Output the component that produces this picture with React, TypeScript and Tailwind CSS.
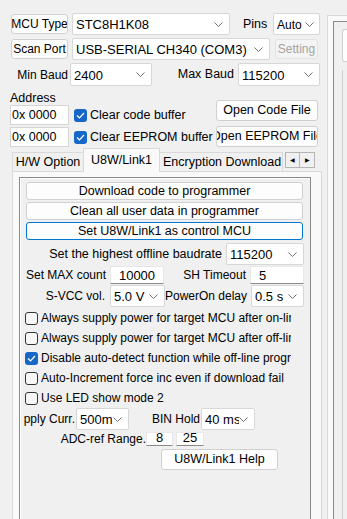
import clsx from "clsx";
import type { ReactNode } from "react";

function Chevron() {
  return (
    <svg width="9" height="5" viewBox="0 0 9 5" className="shrink-0">
      <polyline points="0.5,0.5 4.5,4.5 8.5,0.5" fill="none" stroke="#707070" strokeWidth="1" />
    </svg>
  );
}

function Combo({ value, className }: { value: string; className?: string }) {
  return (
    <div
      className={clsx(
        "flex h-[22px] shrink-0 items-center rounded-[2px] border border-[#d7d7d7] bg-white pl-[3px] pr-[6px] text-[13px]",
        className,
      )}
    >
      <span className="min-w-0 flex-1 overflow-hidden whitespace-nowrap pt-[2px]">{value}</span>
      <Chevron />
    </div>
  );
}

function Btn({
  children,
  className,
  focus,
  disabled,
}: {
  children: ReactNode;
  className?: string;
  focus?: boolean;
  disabled?: boolean;
}) {
  return (
    <div
      className={clsx(
        "flex shrink-0 items-center justify-center overflow-hidden whitespace-nowrap rounded-[3px] border",
        focus ? "border-[#0078d7]" : disabled ? "border-[#e2e2e2]" : "border-[#d0d0d0]",
        disabled ? "bg-[#f4f4f4] text-[#a3a3a3]" : "bg-[#fdfdfd]",
        className,
      )}
    >
      {children}
    </div>
  );
}

function Check({ on }: { on?: boolean }) {
  if (on) {
    return (
      <div className="flex h-[13px] w-[13px] shrink-0 items-center justify-center rounded-[3px] bg-[#1767c6]">
        <svg width="9" height="7" viewBox="0 0 9 7">
          <polyline points="1,3.5 3.5,6 8,1" fill="none" stroke="#fff" strokeWidth="1.2" />
        </svg>
      </div>
    );
  }
  return <div className="h-[13px] w-[13px] shrink-0 rounded-[3px] border border-[#333] bg-[#f7f7f7]" />;
}

function Edit({ value, className }: { value: string; className?: string }) {
  return (
    <div
      className={clsx(
        "flex shrink-0 items-end justify-center border border-[#e8e8e8] border-b-[#8a8a8a] bg-white text-[13px] leading-none",
        className,
      )}
    >
      <span className="pb-[1px]">{value}</span>
    </div>
  );
}

const options = [
  { label: "Always supply power for target MCU after on-line program", on: false },
  { label: "Always supply power for target MCU after off-line program", on: false },
  { label: "Disable auto-detect function while off-line program", on: true },
  { label: "Auto-Increment force inc even if download fail", on: false },
  { label: "Use LED show mode 2", on: false },
];

export default function App() {
  return (
    <div className="flex h-[519px] w-[347px] overflow-hidden bg-[#f0f0f0] font-['Liberation_Sans',Arial,sans-serif] text-[12px] text-black">
      <div className="flex w-[322px] shrink-0 flex-col">
        <div className="mt-[13px] flex h-[22px] items-center">
          <Btn className="ml-[11px] h-[20px] w-[57px]">MCU Type</Btn>
          <Combo value="STC8H1K08" className="ml-[4px] w-[158px]" />
          <span className="ml-[13px] w-[25px] text-[12.5px]">Pins</span>
          <Combo value="Auto" className="ml-[5px] w-[47px] !pr-[5px] !text-[12px]" />
        </div>

        <div className="mt-[3px] flex h-[22px] items-center">
          <Btn className="ml-[11px] h-[20px] w-[57px]">Scan Port</Btn>
          <Combo value="USB-SERIAL CH340 (COM3)" className="ml-[4px] w-[198px]" />
          <Btn disabled className="ml-[5px] h-[20px] w-[43px]">
            Setting
          </Btn>
        </div>

        <div className="mt-[3px] flex h-[23px] items-center">
          <span className="w-[68px] text-right">Min Baud</span>
          <Combo value="2400" className="ml-[2px] h-[23px] w-[82px]" />
          <span className="w-[86px] pr-[4px] text-right text-[12.5px]">Max Baud</span>
          <Combo value="115200" className="h-[23px] w-[82px]" />
        </div>

        <div className="mt-[2px] flex">
          <div className="ml-[10px] flex w-[206px] flex-col">
            <span className="h-[17px] text-[12.5px] leading-[20px]">Address</span>
            <div className="flex h-[20px] items-center">
              <div className="flex h-[20px] w-[59px] items-center border border-[#d5d5d5] bg-white pl-[1px] text-[12.5px]">
                0x 0000
              </div>
              <div className="ml-[5px]">
                <Check on />
              </div>
              <span className="ml-[3px] text-[12.5px]">Clear code buffer</span>
            </div>
            <div className="mt-[2px] flex h-[20px] items-center">
              <div className="flex h-[20px] w-[59px] items-center border border-[#d5d5d5] bg-white pl-[1px] text-[12.5px]">
                0x 0000
              </div>
              <div className="ml-[5px]">
                <Check on />
              </div>
              <span className="ml-[3px] whitespace-nowrap text-[12.5px]">Clear EEPROM buffer</span>
            </div>
          </div>
          <div className="flex w-[102px] flex-col pt-[12px] text-[12.5px]">
            <Btn className="h-[21px] w-[102px]">Open Code File</Btn>
            <Btn className="mt-[5px] h-[21px] w-[102px]">
              <span className="shrink-0">Open EEPROM File</span>
            </Btn>
          </div>
        </div>

        <div className="relative z-10 ml-[12px] mt-[1px] flex h-[23px] items-end text-[12.5px]">
          <div className="flex h-[19px] w-[71px] items-center justify-center border-l border-t border-[#d9d9d9] bg-[#f0f0f0] pt-[1px]">
            H/W Option
          </div>
          <div className="-mb-px flex h-[24px] w-[77px] items-start justify-center border-x border-t border-[#d9d9d9] bg-[#f9f9f9] pt-[2px]">
            U8W/Link1
          </div>
          <div className="flex h-[19px] w-[123px] items-center overflow-hidden whitespace-nowrap border-r border-t border-[#d9d9d9] bg-[#f0f0f0] pl-[3px] pt-[1px]">
            Encryption Download
          </div>
          <div className="mb-[3px] ml-[2px] flex">
            <div className="flex h-[16px] w-[15px] items-center justify-center border border-[#b5b5b5] bg-[#f0f0f0] text-[6px]">
              ◀
            </div>
            <div className="flex h-[16px] w-[15px] items-center justify-center border border-l-0 border-[#b5b5b5] bg-[#f0f0f0] text-[6px]">
              ▶
            </div>
          </div>
        </div>

        <div className="ml-[12px] h-[400px] w-[310px] shrink-0 border border-[#d9d9d9] bg-[#f9f9f9] pl-[6px] pt-[5px]">
          <div className="flex h-[400px] w-[292px] flex-col border border-[#8a8a8a] bg-[#f0f0f0] text-[12px] shadow-[inset_1px_1px_0_#ffffff]">
            <Btn className="ml-[6px] mt-[4px] h-[18px] w-[277px] text-[12.5px]">Download code to programmer</Btn>
            <Btn className="ml-[6px] mt-[2px] h-[18px] w-[277px] text-[12.5px]">
              Clean all user data in programmer
            </Btn>
            <Btn focus className="ml-[6px] mt-[2px] h-[18px] w-[277px] text-[12.5px]">
              Set U8W/Link1 as control MCU
            </Btn>

            <div className="mt-[3px] flex h-[22px] items-center">
              <span className="w-[202px] text-right text-[12.5px]">Set the highest offline baudrate</span>
              <Combo value="115200" className="ml-[4px] w-[78px]" />
            </div>

            <div className="mt-[1px] flex h-[18px] items-center">
              <span className="w-[86px] text-right">Set MAX count</span>
              <Edit value="10000" className="ml-[4px] h-[18px] w-[54px]" />
              <span className="w-[82px] text-right">SH Timeout</span>
              <Edit value="5" className="ml-[4px] h-[18px] w-[54px] !justify-start pl-[8px]" />
            </div>

            <div className="mt-[1px] flex h-[22px] items-center">
              <span className="w-[85px] text-right">S-VCC vol.</span>
              <Combo value="5.0 V" className="ml-[5px] w-[55px]" />
              <span className="w-[84px] overflow-hidden whitespace-nowrap">PowerOn delay</span>
              <Combo value="0.5 s" className="ml-[2px] w-[53px]" />
            </div>

            <div className="mt-[1px] flex flex-col">
              {options.map((o) => (
                <div key={o.label} className="flex h-[20px] items-center pl-[5px]">
                  <Check on={o.on} />
                  <span className="ml-[3px] w-[250px] overflow-hidden whitespace-nowrap">{o.label}</span>
                </div>
              ))}
            </div>

            <div className="flex h-[22px] items-center">
              <span className="w-[55px] text-right">pply Curr.</span>
              <Combo value="500m" className="ml-[1px] w-[53px]" />
              <span className="w-[71px] text-right">BIN Hold</span>
              <Combo value="40 ms" className="ml-[1px] w-[54px]" />
            </div>

            <div className="mt-[1px] flex h-[15px] items-center">
              <span className="w-[126px] text-right">ADC-ref Range.</span>
              <Edit value="8" className="h-[14px] w-[27px]" />
              <Edit value="25" className="ml-[3px] h-[14px] w-[28px]" />
            </div>

            <Btn className="ml-[141px] mt-[3px] h-[21px] w-[117px] text-[12.5px]">U8W/Link1 Help</Btn>
          </div>
        </div>
      </div>

      <div className="flex min-w-0 flex-1 flex-col">
        <div className="ml-[5px] mt-[15px] flex h-[20px] items-center overflow-hidden whitespace-nowrap border-l border-t border-[#d9d9d9] bg-[#f9f9f9] pl-[4px] text-[12.5px]">
          Co
        </div>
        <div className="ml-[5px] flex-1 border-l border-[#d9d9d9] bg-[#f9f9f9] pl-[5px] pt-[5px]">
          <div className="h-full border-l border-t border-[#8a8a8a] bg-[#f0f0f0] pl-[8px] pt-[7px]">
            <div className="h-[33px] rounded-l-[3px] border-y border-l border-[#d0d0d0] bg-[#fdfdfd]" />
            <div className="mt-[8px] h-[500px] border-l border-[#d0d0d0]" />
          </div>
        </div>
      </div>
    </div>
  );
}
